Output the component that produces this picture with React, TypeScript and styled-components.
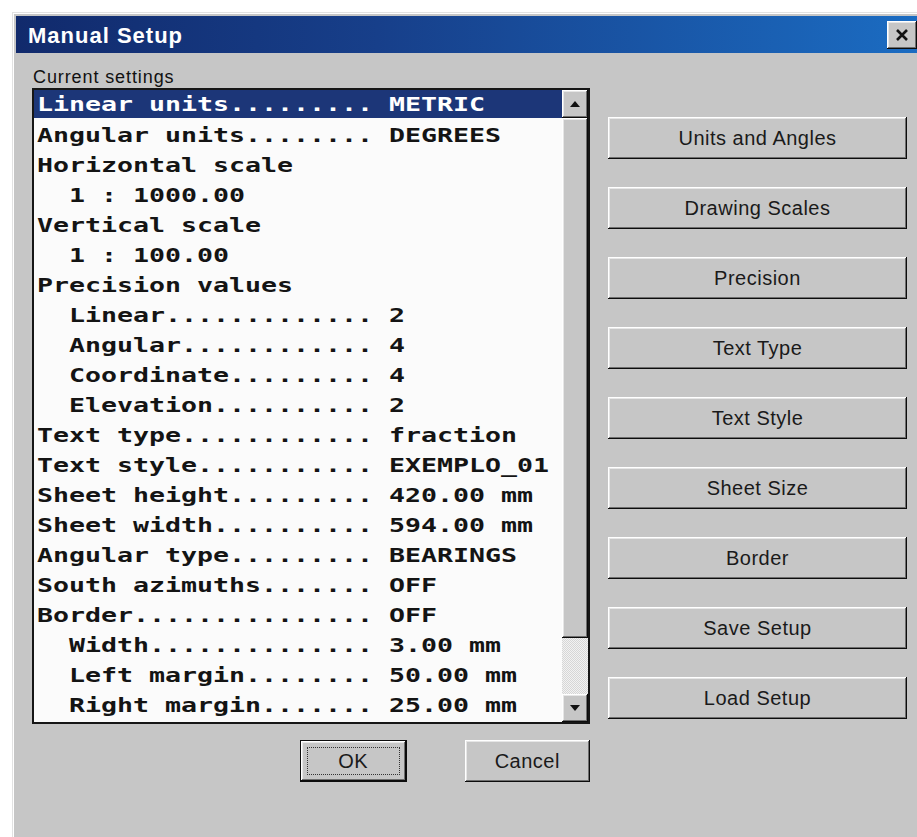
import styled, { createGlobalStyle, css } from "styled-components";

const GlobalStyle = createGlobalStyle`
  html, body {
    margin: 0;
    padding: 0;
    background: #ffffff;
    overflow: hidden;
  }
`;

const FACE = "#c6c6c6";
const SANS = `"Liberation Sans", Arial, sans-serif`;
const MONO = `"DejaVu Sans Mono", "Liberation Mono", monospace`;

const raised = css`
  box-shadow:
    inset -1px -1px #0c0c0c,
    inset 1px 1px #ffffff,
    inset -2px -2px #6e6e6e,
    inset 2px 2px #e6e6e6;
`;

const Dialog = styled.div`
  margin: 12px 0 0 12px;
  width: 910px;
  height: 840px;
  box-sizing: border-box;
  background: ${FACE};
  border-top: 1px solid #e2e2e2;
  border-left: 1px solid #e2e2e2;
  box-shadow: inset 1px 1px #ffffff;
  padding: 3px 3px 0 3px;
  display: flex;
  flex-direction: column;
`;

const TitleBar = styled.div`
  height: 37px;
  display: flex;
  align-items: center;
  padding: 2px 2px 0 12px;
  box-sizing: border-box;
  background: linear-gradient(to right, #112a6c 0%, #173f8a 40%, #1b6cc2 100%);
`;

const Title = styled.div`
  flex: 1;
  font-family: ${SANS};
  font-weight: 700;
  font-size: 22px;
  letter-spacing: 1px;
  color: #ffffff;
`;

const CloseButton = styled.div`
  width: 30px;
  height: 28px;
  margin-top: -2px;
  display: grid;
  place-items: center;
  background: ${FACE};
  ${raised};
`;

const Content = styled.div`
  display: flex;
  gap: 18px;
  padding: 14px 0 0 16px;
`;

const LeftColumn = styled.div`
  width: 558px;
  display: flex;
  flex-direction: column;
`;

const Caption = styled.div`
  height: 21px;
  line-height: 21px;
  padding-left: 1px;
  font-family: ${SANS};
  font-size: 18px;
  letter-spacing: 0.9px;
  color: #111;
`;

const ListBox = styled.div`
  height: 636px;
  box-sizing: border-box;
  border: 2px solid #161616;
  background: #fbfbfb;
  display: flex;
`;

const Rows = styled.div`
  flex: 1;
  overflow: hidden;
`;

const Row = styled.div<{ $selected?: boolean }>`
  height: 30px;
  line-height: 30px;
  padding-left: 3px;
  white-space: pre;
  font-family: ${MONO};
  font-weight: 700;
  font-size: 20px;
  color: ${(p) => (p.$selected ? "#ffffff" : "#141414")};
  background: ${(p) => (p.$selected ? "#1c3678" : "transparent")};
  ${(p) => p.$selected && "height: 28px; line-height: 28px; margin-bottom: 2px;"}
`;

/* bitmap-style wide cells: 16px per character */
const RowText = styled.span`
  display: inline-block;
  transform: scaleX(1.329);
  transform-origin: left center;
`;

const ScrollBar = styled.div`
  width: 26px;
  display: flex;
  flex-direction: column;
  background: ${FACE};
`;

const ArrowButton = styled.div`
  height: 28px;
  display: grid;
  place-items: center;
  background: ${FACE};
  ${raised};
`;

const Thumb = styled.div`
  flex: 1;
  background: ${FACE};
  ${raised};
`;

const Track = styled.div`
  height: 56px;
  background-color: #e4e4e4;
  background-image: repeating-conic-gradient(#f2f2f2 0 25%, #d6d6d6 0 50%);
  background-size: 2px 2px;
`;

const ActionRow = styled.div`
  display: flex;
  gap: 58px;
  margin-top: 16px;
  padding-left: 268px;
`;

const PushButton = styled.div<{ $width: number; $default?: boolean }>`
  width: ${(p) => p.$width}px;
  height: 42px;
  box-sizing: border-box;
  display: grid;
  place-items: center;
  background: ${FACE};
  font-family: ${SANS};
  font-size: 20px;
  letter-spacing: 0.5px;
  color: #1a1a1a;
  ${raised};
  ${(p) =>
    p.$default &&
    css`
      border: 1px solid #0c0c0c;
    `}
`;

const FocusRing = styled.span`
  display: grid;
  place-items: center;
  width: calc(100% - 14px);
  height: calc(100% - 14px);
  border: 1px dotted #333;
`;

const RightColumn = styled.div`
  display: flex;
  flex-direction: column;
  gap: 28px;
  padding-top: 50px;
`;

type Setting = {
  label: string;
  value?: string;
  indent?: number;
  selected?: boolean;
};

const settings: Setting[] = [
  { label: "Linear units", value: "METRIC", selected: true },
  { label: "Angular units", value: "DEGREES" },
  { label: "Horizontal scale" },
  { label: "1 : 1000.00", indent: 2 },
  { label: "Vertical scale" },
  { label: "1 : 100.00", indent: 2 },
  { label: "Precision values" },
  { label: "Linear", value: "2", indent: 2 },
  { label: "Angular", value: "4", indent: 2 },
  { label: "Coordinate", value: "4", indent: 2 },
  { label: "Elevation", value: "2", indent: 2 },
  { label: "Text type", value: "fraction" },
  { label: "Text style", value: "EXEMPLO_01" },
  { label: "Sheet height", value: "420.00 mm" },
  { label: "Sheet width", value: "594.00 mm" },
  { label: "Angular type", value: "BEARINGS" },
  { label: "South azimuths", value: "OFF" },
  { label: "Border", value: "OFF" },
  { label: "Width", value: "3.00 mm", indent: 2 },
  { label: "Left margin", value: "50.00 mm", indent: 2 },
  { label: "Right margin", value: "25.00 mm", indent: 2 },
];

const sideButtons = [
  "Units and Angles",
  "Drawing Scales",
  "Precision",
  "Text Type",
  "Text Style",
  "Sheet Size",
  "Border",
  "Save Setup",
  "Load Setup",
];

const formatSetting = ({ label, value, indent = 0 }: Setting) => {
  const head = " ".repeat(indent) + label;
  if (value === undefined) return head;
  return head.padEnd(21, ".") + " " + value;
};

const Arrow = ({ up }: { up?: boolean }) => (
  <svg width="10" height="6" viewBox="0 0 10 6">
    <polygon points={up ? "5,0 10,6 0,6" : "0,0 10,0 5,6"} fill="#111" />
  </svg>
);

const CloseGlyph = () => (
  <svg width="14" height="12" viewBox="0 0 14 12">
    <path d="M2 1 L12 11 M12 1 L2 11" stroke="#111" strokeWidth="2.6" />
  </svg>
);

const App = () => (
  <>
    <GlobalStyle />
    <Dialog>
      <TitleBar>
        <Title>Manual Setup</Title>
        <CloseButton>
          <CloseGlyph />
        </CloseButton>
      </TitleBar>
      <Content>
        <LeftColumn>
          <Caption>Current settings</Caption>
          <ListBox>
            <Rows>
              {settings.map((s) => (
                <Row key={s.label} $selected={s.selected}>
                  <RowText>{formatSetting(s)}</RowText>
                </Row>
              ))}
            </Rows>
            <ScrollBar>
              <ArrowButton>
                <Arrow up />
              </ArrowButton>
              <Thumb />
              <Track />
              <ArrowButton>
                <Arrow />
              </ArrowButton>
            </ScrollBar>
          </ListBox>
          <ActionRow>
            <PushButton $width={112} $default>
              <FocusRing>OK</FocusRing>
            </PushButton>
            <PushButton $width={132}>Cancel</PushButton>
          </ActionRow>
        </LeftColumn>
        <RightColumn>
          {sideButtons.map((b) => (
            <PushButton key={b} $width={299}>
              {b}
            </PushButton>
          ))}
        </RightColumn>
      </Content>
    </Dialog>
  </>
);

export default App;
